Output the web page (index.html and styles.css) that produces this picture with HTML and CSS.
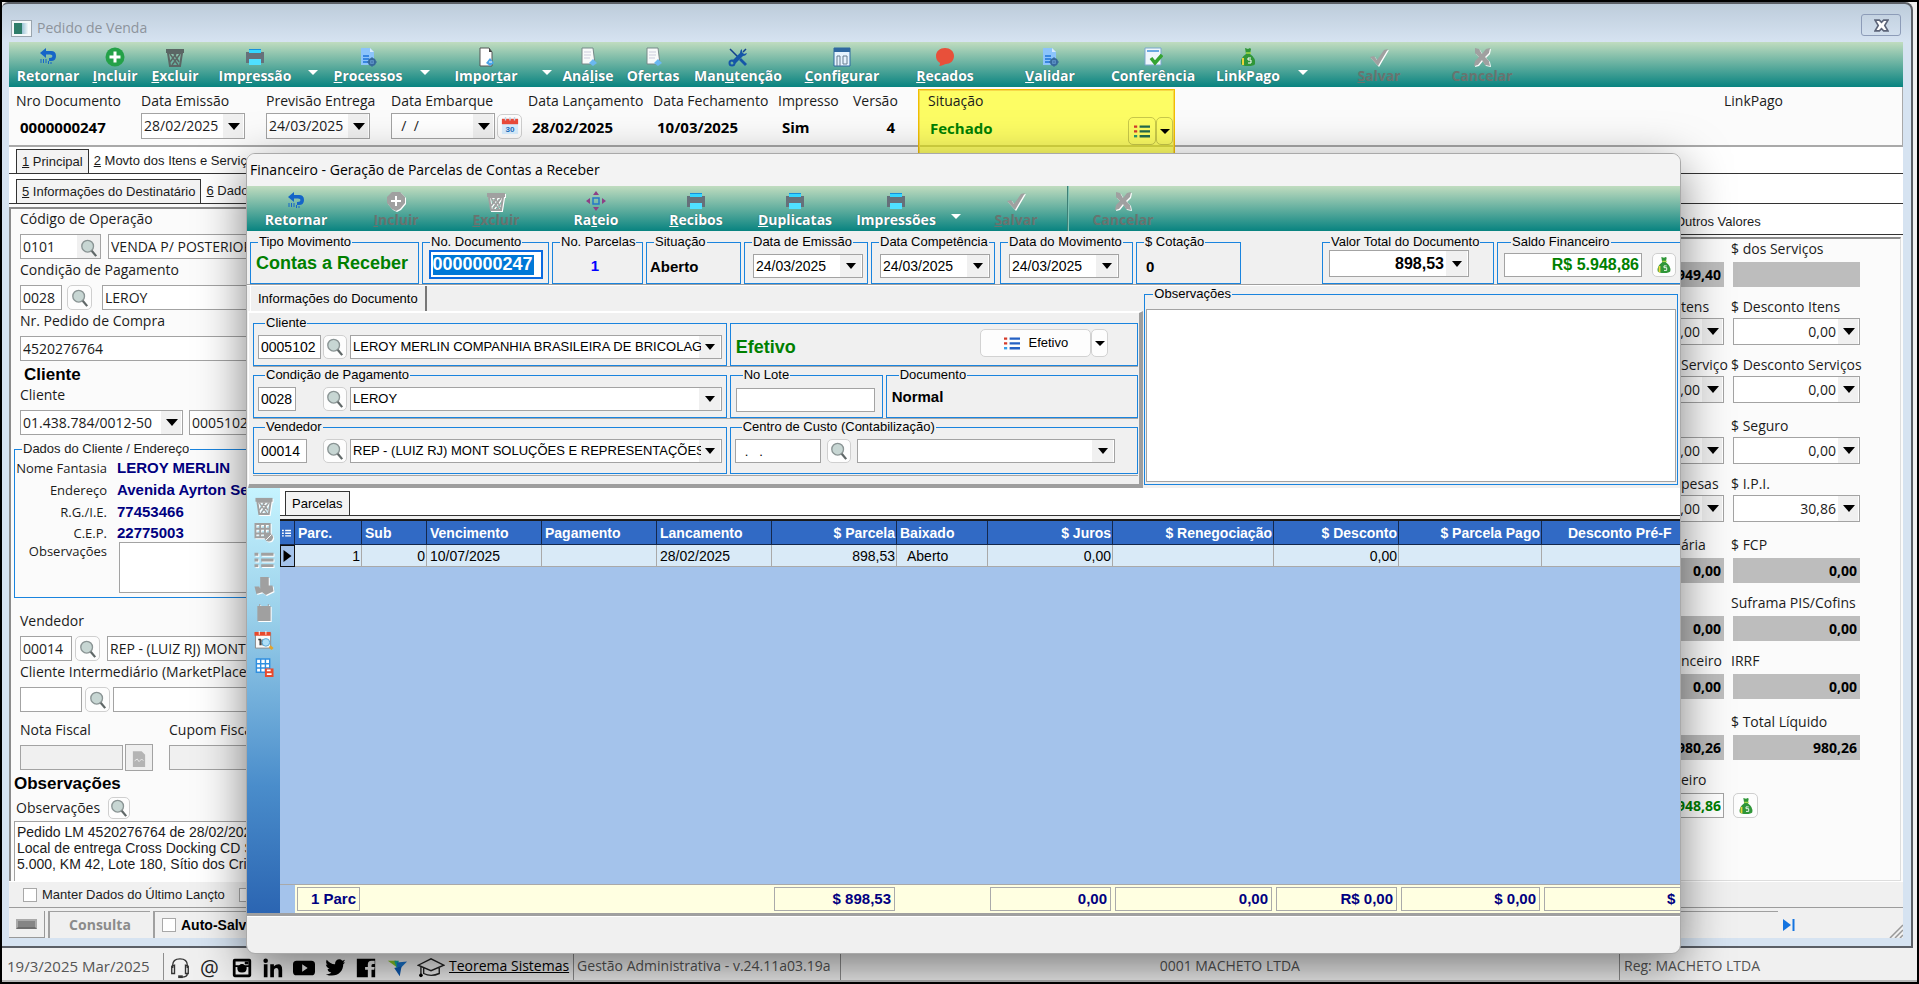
FILE: index.html
```html
<!DOCTYPE html>
<html lang="pt-BR">
<head>
    <meta charset="UTF-8">
    <title>Pedido de Venda</title>
    <link rel="stylesheet" href="styles.css">
</head>
<body>
    <!-- Icon definitions -->
    <svg class="icon-defs" aria-hidden="true">
        <symbol id="i-return" viewBox="0 0 20 20">
            <path d="M2 6 L8 1 V4 H13 Q18 4 18 9 Q18 14 13 14 H11 V11 H12 Q14.500 11 14.500 9 Q14.500 7.500 12 7.500 H8 V11 Z" fill="#1565c8"/>
            <path d="M3 12v4M5.500 12v4M8 12v4M10.500 14v3M13 15v2" stroke="#1565c8" stroke-width="1"/>
        </symbol>
        <symbol id="i-plus" viewBox="0 0 20 20">
            <circle cx="10" cy="10" r="9.500" fill="#24a148"/>
            <path d="M10 4.500v11M4.500 10h11" stroke="#fff" stroke-width="3"/>
        </symbol>
        <symbol id="i-plus-off" viewBox="0 0 20 20">
            <path d="M6 1h8l5 5v6l-5 6-4 2-4-2-5-6V6z" fill="#a0a0a0"/>
            <path d="M10 5v10M5 10h10" stroke="#fff" stroke-width="2"/>
        </symbol>
        <symbol id="i-trash" viewBox="0 0 20 20">
            <path d="M1 2h18v4H1z" fill="currentColor"/>
            <path d="M3 6h14l-2 13H5z" fill="none" stroke="currentColor" stroke-width="2"/>
            <path d="M5 7l8 11M9 7l5 8M15 7L7 18M11 7l-6 8" stroke="currentColor" stroke-width="1.500"/>
        </symbol>
        <symbol id="i-printer" viewBox="0 0 20 20">
            <path d="M4 2h12v5H4z" fill="#35d6ff"/>
            <path d="M4 2h12v2H4z" fill="#1690dc"/>
            <path d="M1 5h18v11H1z" fill="#66707a"/>
            <path d="M4 12h12v6H4z" fill="#4fe0ff"/>
            <path d="M4 3h12v3H4z" fill="#35d6ff"/>
        </symbol>
        <symbol id="i-docgear" viewBox="0 0 20 20">
            <path d="M3 1h9l4 4v13H3z" fill="#8cc4fb"/>
            <path d="M12 1v4h4z" fill="#d6ebff"/>
            <path d="M5 9h6M5 12h6M5 15h5" stroke="#1d72d8" stroke-width="1.500"/>
            <circle cx="14" cy="15" r="3" fill="none" stroke="#36699c" stroke-width="2"/>
            <path d="M14 10v10M9 15h10" stroke="#36699c" stroke-width="1"/>
        </symbol>
        <symbol id="i-doc" viewBox="0 0 20 20">
            <path d="M4 1h9l3 4v14H4z" fill="#fff" stroke="#555"/>
            <path d="M13 1v4h3z" fill="#444"/>
            <path d="M14 11l4 5-4 3-4-3z" fill="#4aa3e8"/>
            <path d="M13 15h3" stroke="#fff"/>
        </symbol>
        <symbol id="i-doclines" viewBox="0 0 20 20">
            <path d="M4 1h11l2 16H4z" fill="#f8fafa" stroke="#788"/>
            <path d="M6 5h7M6 8h7M6 11h6" stroke="#ccd"/>
            <path d="M15 12l4 4-4 3-4-3z" fill="#6ab8f0"/>
        </symbol>
        <symbol id="i-tools" viewBox="0 0 20 20">
            <path d="M2 2l9 9M18 2l-3 3" stroke="#123f8e" stroke-width="1.500"/>
            <path d="M13 11l6 6-2 2-6-6z" fill="#1556a8"/>
            <path d="M14 2q-2 1-2 4L4 14l3 3 8-8q3 0 4-3l-3 1-2-2z" fill="#1556a8"/>
            <circle cx="4" cy="16" r="2.500" fill="none" stroke="#1556a8" stroke-width="2"/>
        </symbol>
        <symbol id="i-window" viewBox="0 0 20 20">
            <path d="M2 1h16v18H2z" fill="#e6f4ff" stroke="#2f68a0"/>
            <path d="M2 1h16v4H2z" fill="#2f68a0"/>
            <path d="M5 19V9h3v10M11 9h4v8h-4z" fill="none" stroke="#667c90"/>
        </symbol>
        <symbol id="i-bubble" viewBox="0 0 20 20">
            <path d="M10 1c5 0 9 3 9 8s-4 8-8 8c-1 0-4 2-7 2 1-1 1-2 1-3-3-2-4-4-4-7 0-5 4-8 9-8z" fill="#e8503a"/>
        </symbol>
        <symbol id="i-doccheck" viewBox="0 0 20 20">
            <path d="M2 1h16v17H2z" fill="#eef6fc" stroke="#7aa6cc"/>
            <path d="M4 3h12v2H4z" fill="#6aa9e2"/>
            <path d="M8 11l4 5 7-8" fill="none" stroke="#35a432" stroke-width="3.500"/>
        </symbol>
        <symbol id="i-bag" viewBox="0 0 20 20">
            <path d="M7 1l3 1 2-1 1 1-1 5q6 4 5 10-1 2-7 2t-7-2Q2 11 8 7z" fill="#2f9638"/>
            <path d="M8 6h5" stroke="#a7d94a" stroke-width="1.500"/>
            <path d="M4 11h2v7H4z" fill="#e9d53c"/>
            <path d="M13 11h-3v2h3v3h-3" fill="none" stroke="#fff" stroke-width="1"/>
        </symbol>
        <symbol id="i-check" viewBox="0 0 20 20">
            <path d="M1 10l4-1 3 4 7-10 4-1-10 17z" fill="#a0a0a0"/>
        </symbol>
        <symbol id="i-cross" viewBox="0 0 20 20">
            <path d="M3 1l4 1 3 5 4-5 4-1-1 5-4 4 4 4 1 5-5-1-3-5-4 5-4 1 1-5 4-4-4-4z" fill="#a0a0a0"/>
        </symbol>
        <symbol id="i-move" viewBox="0 0 20 20">
            <path d="M10 0l3 4H7zM10 20l3-4H7zM0 10l4-3v6zM20 10l-4-3v6z" fill="#8e3f86"/>
            <path d="M7 7h6v6H7z" fill="none" stroke="#2578c8" stroke-width="1.500"/>
        </symbol>
        <symbol id="i-search" viewBox="0 0 20 20">
            <circle cx="8.500" cy="8" r="6.500" fill="#c7d6d3" stroke="#8a9494" stroke-width="1.500"/>
            <path d="M13 13l5 6" stroke="#606868" stroke-width="2.500"/>
        </symbol>
        <symbol id="i-calendar" viewBox="0 0 20 20">
            <path d="M1 2h18v17H1z" fill="#d9efff"/>
            <path d="M1 2h18v6H1z" fill="#ea4b3a"/>
            <path d="M5 0v4M10 0v4M15 0v4" stroke="#c6dced" stroke-width="1.500"/>
            <text x="10" y="17" text-anchor="middle" class="cal-text">30</text>
        </symbol>
        <symbol id="i-list" viewBox="0 0 20 20">
            <path d="M0 3h4v3H0zM0 9h4v3H0z" fill="var(--dot, #d43b2a)"/>
            <path d="M0 15h4v3H0z" fill="var(--dot3, #38a0e8)"/>
            <path d="M7 3h13v3H7zM7 9h13v3H7zM7 15h13v3H7z" fill="var(--bar, #2561c4)"/>
        </symbol>
        <symbol id="i-tableoff" viewBox="0 0 20 20">
            <path d="M1 1h15v14H1zM6 1v14M11 1v14M1 6h15M1 11h15" fill="none" stroke="#a0a0a0" stroke-width="2"/>
            <circle cx="15" cy="15" r="4.500" fill="#a0a0a0"/>
            <path d="M12 18l6-6" stroke="#fff"/>
        </symbol>
        <symbol id="i-stamp" viewBox="0 0 20 20">
            <path d="M6 0h9v9h4l1 6-8 4-4-3-6 2-2-8h5l1 2z" fill="#a0a0a0"/>
        </symbol>
        <symbol id="i-note" viewBox="0 0 20 20">
            <path d="M3 2h2V0h1v2h8V0h1v2h2v16H3z" fill="#a0a0a0"/>
        </symbol>
        <symbol id="i-calsearch" viewBox="0 0 20 20">
            <path d="M1 2h16v16H1z" fill="#fafafa" stroke="#888"/>
            <path d="M0 1h17v4H0z" fill="#e8492c"/>
            <path d="M5 0v4M12 0v4" stroke="#fff"/>
            <path d="M4 9h2v6M8 9v6" stroke="#333" stroke-width="1.500" fill="none"/>
            <circle cx="12" cy="12" r="4" fill="#aee0fa" stroke="#5aa8d4"/>
            <path d="M16 16l3 3" stroke="#e2a32b" stroke-width="3"/>
        </symbol>
        <symbol id="i-gridsave" viewBox="0 0 20 20">
            <path d="M2 1h14v14H2z" fill="#fff"/>
            <path d="M2 1h14v14H2zM6.500 1v14M11.500 1v14M2 6h14M2 10.500h14" fill="none" stroke="#2f8fe0" stroke-width="1.500"/>
            <path d="M11 11h9v9h-9z" fill="#e8492c"/>
            <path d="M13 12h4v2h-4zM13 16h5v2h-5z" fill="#fff"/>
        </symbol>
        <symbol id="i-headset" viewBox="0 0 24 24">
            <path d="M4 12V9q0-7 8-7t8 7v3M3 10v8h3v-9zM18 9v9h3v-8zM20 18q0 4-6 4" fill="none" stroke="#333" stroke-width="1.500"/>
            <path d="M10 20h5v3h-5z" fill="#333"/>
        </symbol>
        <symbol id="i-insta" viewBox="0 0 24 24">
            <path fill-rule="evenodd" d="M4 2h16q2 0 2 2v16q0 2-2 2H4q-2 0-2-2V4q0-2 2-2zm1 3v4h4q3-3 6 0h4V5zm0 6v8h14v-8h-2q1 6-5 6t-5-6z" fill="#000"/>
            <circle cx="12" cy="12" r="3" fill="none" stroke="#000" stroke-width="1.500"/>
            <path d="M15 5h4v3h-4z" fill="#000"/>
        </symbol>
        <symbol id="i-in" viewBox="0 0 24 24">
            <circle cx="4" cy="4" r="2.500"/>
            <path d="M2 8h4v14H2zM9 8h4v2q2-2 5-2 4 0 4 6v8h-4v-7q0-3-2-3-3 0-3 3v7H9z"/>
        </symbol>
        <symbol id="i-tube" viewBox="0 0 24 24">
            <path fill-rule="evenodd" d="M4 4h16q4 0 4 4v8q0 4-4 4H4q-4 0-4-4V8q0-4 4-4zm6 4v8l6-4z"/>
        </symbol>
        <symbol id="i-bird" viewBox="0 0 24 24">
            <path d="M23 6l-2 2c0 9-8 15-19 11 3 0 5-1 6-2-3-1-4-2-4-4h2c-2-1-4-3-4-5l2 1C2 7 2 5 3 3c3 3 5 5 9 5 0-5 5-7 8-4l3-1-2 3z"/>
        </symbol>
        <symbol id="i-face" viewBox="0 0 24 24">
            <path fill-rule="evenodd" d="M2 2h20v20h-4v-8h3l.500-3H18V9q0-1.500 2-1.500h1.500V4H18q-4 0-4 4v3h-3v3h3v8H2z"/>
        </symbol>
        <symbol id="i-teorema" viewBox="0 0 24 24">
            <path d="M2 4h9l2 8z" fill="#8ac926"/>
            <path d="M9 4h5l-2 9z" fill="#11b0a5"/>
            <path d="M12 6l11-1-7 7-4-1z" fill="#1976d2"/>
            <path d="M9 12l8-2-2 11z" fill="#0d5bb5"/>
        </symbol>
        <symbol id="i-cap" viewBox="0 0 30 24">
            <path d="M1 9l14-7 14 7-14 6zM7 12v6q8 4 17 0v-6M4 11v8" fill="none" stroke="#222" stroke-width="1.500"/>
            <circle cx="4" cy="20" r="2"/>
        </symbol>
    </svg>

    <div class="app">
        <!-- Main window -->
        <main class="window">
            <div class="titlebar">
                <span class="app-icon"></span>
                <h1>Pedido de Venda</h1>
                <button class="close" aria-label="Fechar">
                    <svg viewBox="0 0 14 12" width="15" height="13"><path d="M1 1h4l2 2 2-2h4L10 6l3 5H9L7 9l-2 2H1l3-5z" fill="#fff" stroke="#5c6478" stroke-width="1.500"/></svg>
                </button>
            </div>

            <div class="client">
                <nav class="toolbar main-toolbar">
                    <button class="tool"><svg><use href="#i-return"/></svg>Retornar</button>
                    <button class="tool"><svg><use href="#i-plus"/></svg><span><u>I</u>ncluir</span></button>
                    <button class="tool trash"><svg><use href="#i-trash"/></svg><span><u>E</u>xcluir</span></button>
                    <button class="tool"><svg><use href="#i-printer"/></svg><span>Imp<u>r</u>essão</span></button>
                    <button class="more" aria-label="Mais impressões"></button>
                    <button class="tool"><svg><use href="#i-docgear"/></svg><span><u>P</u>rocessos</span></button>
                    <button class="more" aria-label="Mais processos"></button>
                    <button class="tool"><svg><use href="#i-doc"/></svg><span>Impor<u>t</u>ar</span></button>
                    <button class="more" aria-label="Mais importar"></button>
                    <button class="tool"><svg><use href="#i-doclines"/></svg><span>Aná<u>l</u>ise</span></button>
                    <button class="tool"><svg><use href="#i-doclines"/></svg>Ofertas</button>
                    <button class="tool"><svg><use href="#i-tools"/></svg><span>Man<u>u</u>tenção</span></button>
                    <button class="tool"><svg><use href="#i-window"/></svg><span><u>C</u>onfigurar</span></button>
                    <button class="tool"><svg><use href="#i-bubble"/></svg><span><u>R</u>ecados</span></button>
                    <button class="tool"><svg><use href="#i-docgear"/></svg><span><u>V</u>alidar</span></button>
                    <button class="tool"><svg><use href="#i-doccheck"/></svg>Conferência</button>
                    <button class="tool"><svg><use href="#i-bag"/></svg>LinkPago</button>
                    <button class="more" aria-label="Mais LinkPago"></button>
                    <button class="tool" disabled><svg><use href="#i-check"/></svg><span><u>S</u>alvar</span></button>
                    <button class="tool" disabled><svg><use href="#i-cross"/></svg>Cancelar</button>
                </nav>

                <!-- Order header -->
                <section class="order-header">
                    <div class="head-field"><span>Nro Documento</span><b>0000000247</b></div>
                    <div class="head-field">
                        <label for="emissao">Data Emissão</label>
                        <select id="emissao"><option>28/02/2025</option></select>
                    </div>
                    <div class="head-field">
                        <label for="entrega">Previsão Entrega</label>
                        <select id="entrega"><option>24/03/2025</option></select>
                    </div>
                    <div class="head-field">
                        <label for="embarque">Data Embarque</label>
                        <div class="line">
                            <select id="embarque"><option>&nbsp; /&nbsp; /</option></select>
                            <button class="mini" aria-label="Calendário"><svg><use href="#i-calendar"/></svg></button>
                        </div>
                    </div>
                    <div class="head-field"><span>Data Lançamento</span><b>28/02/2025</b></div>
                    <div class="head-field"><span>Data Fechamento</span><b>10/03/2025</b></div>
                    <div class="head-field"><span>Impresso</span><b>Sim</b></div>
                    <div class="head-field version"><span>Versão</span><b>4</b></div>
                    <div class="status-mark">
                        <div class="head-field"><span>Situação</span><b>Fechado</b></div>
                        <button class="list-btn" aria-label="Opções"><svg><use href="#i-list"/></svg></button>
                        <button class="arrow-btn" aria-label="Mais opções"></button>
                    </div>
                    <div class="head-field link-pago"><span>LinkPago</span></div>
                </section>

                <div class="tabs">
                    <button class="tab active"><u>1</u> Principal</button>
                    <button class="tab"><u>2</u> Movto dos Itens e Serviços</button>
                </div>
                <div class="tabs">
                    <button class="tab active"><u>5</u> Informações do Destinatário</button>
                    <button class="tab"><u>6</u> Dados</button>
                </div>

                <div class="order-body">
                    <!-- Recipient form -->
                    <section class="recipient">
                        <div class="field">
                            <label for="operacao">Código de Operação</label>
                            <div class="line">
                                <div class="lookup">
                                    <input id="operacao" value="0101">
                                    <button aria-label="Buscar operação"><svg><use href="#i-search"/></svg></button>
                                </div>
                                <input class="wide" aria-label="Operação" value="VENDA P/ POSTERIOR">
                            </div>
                        </div>
                        <div class="field">
                            <label for="condicao">Condição de Pagamento</label>
                            <div class="line payment">
                                <input id="condicao" class="w-code" value="0028">
                                <button class="mini" aria-label="Buscar condição"><svg><use href="#i-search"/></svg></button>
                                <input class="wide" aria-label="Condição" value="LEROY">
                            </div>
                        </div>
                        <div class="field">
                            <label for="pedido">Nr. Pedido de Compra</label>
                            <div class="line"><input id="pedido" class="wide" value="4520276764"></div>
                        </div>
                        <h2>Cliente</h2>
                        <div class="field">
                            <label for="cnpj">Cliente</label>
                            <div class="line">
                                <select id="cnpj" class="w-cnpj"><option>01.438.784/0012-50</option></select>
                                <input class="wide" aria-label="Código do cliente" value="0005102">
                            </div>
                        </div>
                        <fieldset class="group client-data">
                            <legend>Dados do Cliente / Endereço</legend>
                            <span>Nome Fantasia</span><b>LEROY MERLIN</b>
                            <span>Endereço</span><b>Avenida Ayrton Senna</b>
                            <span>R.G./I.E.</span><b>77453466</b>
                            <span>C.E.P.</span><b>22775003</b>
                            <label for="obs-cliente">Observações</label><textarea id="obs-cliente"></textarea>
                        </fieldset>
                        <div class="field seller">
                            <label for="vendedor">Vendedor</label>
                            <div class="line">
                                <input id="vendedor" class="w-seller" value="00014">
                                <button class="mini" aria-label="Buscar vendedor"><svg><use href="#i-search"/></svg></button>
                                <input class="wide" aria-label="Nome do vendedor" value="REP - (LUIZ RJ) MONT">
                            </div>
                        </div>
                        <div class="field">
                            <label for="intermediario">Cliente Intermediário (MarketPlace)</label>
                            <div class="line broker">
                                <input id="intermediario" class="w-inter">
                                <button class="mini" aria-label="Buscar intermediário"><svg><use href="#i-search"/></svg></button>
                                <input class="wide" aria-label="Intermediário">
                            </div>
                        </div>
                        <div class="fiscal">
                            <div class="field">
                                <label for="nota">Nota Fiscal</label>
                                <div class="line">
                                    <input id="nota" class="w-nota" disabled>
                                    <button class="xml" aria-label="XML" disabled><svg viewBox="0 0 16 20"><path d="M1 1h10l4 4v14H1z" fill="#b4b4b4"/><path d="M3 12l3-2 2 3 3-3 2 2" fill="none" stroke="#eee"/></svg></button>
                                </div>
                            </div>
                            <div class="field">
                                <label for="cupom">Cupom Fiscal</label>
                                <div class="line"><input id="cupom" class="wide" disabled></div>
                            </div>
                        </div>
                        <h2 class="obs-title">Observações</h2>
                        <div class="obs-line">
                            <label for="obs">Observações</label>
                            <button class="mini" aria-label="Buscar observações"><svg><use href="#i-search"/></svg></button>
                        </div>
                        <textarea id="obs" class="obs-text">Pedido LM 4520276764 de 28/02/2025
Local de entrega Cross Docking CD SP
5.000, KM 42, Lote 180, Sítio dos Cristais</textarea>
                    </section>

                    <!-- Totals -->
                    <section class="totals">
                        <div class="tabs"><button class="tab">Outros Valores</button></div>
                        <div class="totals-grid">
                            <div class="total"><label for="t1"></label><input id="t1" class="gray" value="949,40"></div>
                            <div class="total"><label for="t2">$ dos Serviços</label><input id="t2" class="gray"></div>
                            <div class="total"><label for="t3">tens</label><select id="t3"><option>0,00</option></select></div>
                            <div class="total"><label for="t4">$ Desconto Itens</label><select id="t4"><option>0,00</option></select></div>
                            <div class="total end"><label for="t5">Serviços</label><select id="t5"><option>0,00</option></select></div>
                            <div class="total end"><label for="t6">$ Desconto Serviços</label><select id="t6"><option>0,00</option></select></div>
                            <div class="total"><label for="t7"></label><select id="t7"><option>0,00</option></select></div>
                            <div class="total"><label for="t8">$ Seguro</label><select id="t8"><option>0,00</option></select></div>
                            <div class="total end"><label for="t9">pesas</label><select id="t9"><option>0,00</option></select></div>
                            <div class="total end"><label for="t10">$ I.P.I.</label><select id="t10"><option>30,86</option></select></div>
                            <div class="total"><label for="t11">ária</label><input id="t11" class="gray" value="0,00"></div>
                            <div class="total"><label for="t12">$ FCP</label><input id="t12" class="gray" value="0,00"></div>
                            <div class="total"><label for="t13"></label><input id="t13" class="gray" value="0,00"></div>
                            <div class="total"><label for="t14">Suframa PIS/Cofins</label><input id="t14" class="gray" value="0,00"></div>
                            <div class="total end"><label for="t15">nceiro</label><input id="t15" class="gray" value="0,00"></div>
                            <div class="total end"><label for="t16">IRRF</label><input id="t16" class="gray" value="0,00"></div>
                            <div class="total"><label for="t17"></label><input id="t17" class="gray" value="980,26"></div>
                            <div class="total"><label for="t18">$ Total Líquido</label><input id="t18" class="gray" value="980,26"></div>
                            <div class="total"><label for="t19">eiro</label><input id="t19" class="green" value="5.948,86"></div>
                            <div class="total bag"><button class="mini" aria-label="Saldo"><svg><use href="#i-bag"/></svg></button></div>
                        </div>
                    </section>
                </div>

                <div class="keep-bar">
                    <label><input type="checkbox"> Manter Dados do Último Lançto</label>
                    <label><input type="checkbox"></label>
                </div>
                <div class="bottom-bar">
                    <button class="key" aria-label="Teclado"><span></span></button>
                    <span class="mode">Consulta</span>
                    <label class="auto"><input type="checkbox"> Auto-Salvar</label>
                    <button class="last" aria-label="Último"><svg viewBox="0 0 14 14" width="16" height="14"><path d="M1 1l8 6-8 6z" fill="#1474e0"/><path d="M11.500 1v12" stroke="#1474e0" stroke-width="2"/></svg></button>
                    <svg class="grip" viewBox="0 0 14 14"><path d="M1 14L14 1M6 14l8-8M11 14l3-3" stroke="#999" stroke-width="1.500"/></svg>
                </div>
            </div>
        </main>

        <!-- Status bar -->
        <footer class="statusbar">
            <span class="date">19/3/2025 Mar/2025</span>
            <nav class="social">
                <a href="#" aria-label="Suporte"><svg><use href="#i-headset"/></svg></a>
                <a href="#" class="at">@</a>
                <a href="#" aria-label="Instagram"><svg><use href="#i-insta"/></svg></a>
                <a href="#" aria-label="LinkedIn"><svg><use href="#i-in"/></svg></a>
                <a href="#" aria-label="YouTube"><svg><use href="#i-tube"/></svg></a>
                <a href="#" aria-label="Twitter"><svg><use href="#i-bird"/></svg></a>
                <a href="#" aria-label="Facebook"><svg><use href="#i-face"/></svg></a>
                <a href="#" aria-label="Teorema"><svg><use href="#i-teorema"/></svg></a>
                <a href="#" aria-label="Treinamento" class="cap"><svg><use href="#i-cap"/></svg></a>
            </nav>
            <a href="#" class="site">Teorema Sistemas</a>
            <span class="version-info">Gestão Administrativa - v.24.11a03.19a</span>
            <span class="company">0001 MACHETO LTDA</span>
            <span class="reg">Reg: MACHETO LTDA</span>
        </footer>
    </div>

    <!-- Financial dialog -->
    <section class="dialog" role="dialog" aria-labelledby="dialog-title">
        <h2 id="dialog-title">Financeiro - Geração de Parcelas de Contas a Receber</h2>
        <nav class="toolbar dialog-toolbar">
            <button class="tool"><svg><use href="#i-return"/></svg>Retornar</button>
            <button class="tool" disabled><svg><use href="#i-plus-off"/></svg><span><u>I</u>ncluir</span></button>
            <button class="tool" disabled><svg><use href="#i-trash"/></svg><span><u>E</u>xcluir</span></button>
            <button class="tool"><svg><use href="#i-move"/></svg><span>Ra<u>t</u>eio</span></button>
            <button class="tool"><svg><use href="#i-printer"/></svg><span><u>R</u>ecibos</span></button>
            <button class="tool"><svg><use href="#i-printer"/></svg><span><u>D</u>uplicatas</span></button>
            <button class="tool"><svg><use href="#i-printer"/></svg>Impressões</button>
            <button class="more" aria-label="Mais impressões"></button>
            <button class="tool" disabled><svg><use href="#i-check"/></svg><span><u>S</u>alvar</span></button>
            <span class="separator"></span>
            <button class="tool" disabled><svg><use href="#i-cross"/></svg>Cancelar</button>
        </nav>

        <div class="summary">
            <fieldset class="group s-type"><legend>Tipo Movimento</legend><b>Contas a Receber</b></fieldset>
            <fieldset class="group s-doc"><legend>No. Documento</legend><input aria-label="No. Documento" value="0000000247"></fieldset>
            <fieldset class="group s-count"><legend>No. Parcelas</legend><b>1</b></fieldset>
            <fieldset class="group s-state"><legend>Situação</legend><b>Aberto</b></fieldset>
            <fieldset class="group s-date"><legend>Data de Emissão</legend><select aria-label="Data de Emissão"><option>24/03/2025</option></select></fieldset>
            <fieldset class="group s-date"><legend>Data Competência</legend><select aria-label="Data Competência"><option>24/03/2025</option></select></fieldset>
            <fieldset class="group s-date s-mov"><legend>Data do Movimento</legend><select aria-label="Data do Movimento"><option>24/03/2025</option></select></fieldset>
            <fieldset class="group s-rate"><legend>$ Cotação</legend><b>0</b></fieldset>
            <fieldset class="group s-total"><legend>Valor Total do Documento</legend><select aria-label="Valor Total do Documento"><option>898,53</option></select></fieldset>
            <fieldset class="group s-balance"><legend>Saldo Financeiro</legend>
                <input aria-label="Saldo Financeiro" value="R$ 5.948,86">
                <button class="mini" aria-label="Ver saldo"><svg><use href="#i-bag"/></svg></button>
            </fieldset>
        </div>

        <div class="document">
            <div class="doc-info">
                <button class="doc-tab">Informações do Documento</button>
                <div class="doc-panel">
                    <div class="doc-row">
                        <fieldset class="group party">
                            <legend>Cliente</legend>
                            <input class="w-full" aria-label="Código do cliente" value="0005102">
                            <button class="mini" aria-label="Buscar cliente"><svg><use href="#i-search"/></svg></button>
                            <select aria-label="Cliente"><option>LEROY MERLIN COMPANHIA BRASILEIRA DE BRICOLAGEM</option></select>
                        </fieldset>
                        <div class="group effective">
                            <b>Efetivo</b>
                            <button class="list-btn"><svg><use href="#i-list"/></svg>Efetivo</button>
                            <button class="arrow-btn" aria-label="Mais opções"></button>
                        </div>
                    </div>
                    <div class="doc-row">
                        <fieldset class="group party">
                            <legend>Condição de Pagamento</legend>
                            <input class="w-short" aria-label="Código da condição" value="0028">
                            <button class="mini" aria-label="Buscar condição"><svg><use href="#i-search"/></svg></button>
                            <select aria-label="Condição de Pagamento"><option>LEROY</option></select>
                        </fieldset>
                        <div class="lot-row">
                            <fieldset class="group lot"><legend>No Lote</legend><input aria-label="No Lote"></fieldset>
                            <fieldset class="group kind"><legend>Documento</legend><b>Normal</b></fieldset>
                        </div>
                    </div>
                    <div class="doc-row last-row">
                        <fieldset class="group party">
                            <legend>Vendedor</legend>
                            <input class="w-mid" aria-label="Código do vendedor" value="00014">
                            <button class="mini" aria-label="Buscar vendedor"><svg><use href="#i-search"/></svg></button>
                            <select aria-label="Vendedor"><option>REP - (LUIZ RJ) MONT SOLUÇÕES E REPRESENTAÇÕES</option></select>
                        </fieldset>
                        <fieldset class="group cost">
                            <legend>Centro de Custo (Contabilização)</legend>
                            <input aria-label="Centro de Custo" value="  .   .">
                            <button class="mini" aria-label="Buscar centro de custo"><svg><use href="#i-search"/></svg></button>
                            <select aria-label="Nome do centro de custo"><option></option></select>
                        </fieldset>
                    </div>
                </div>
            </div>
            <fieldset class="group notes">
                <legend>Observações</legend>
                <textarea aria-label="Observações"></textarea>
            </fieldset>
        </div>

        <div class="installments">
            <aside class="side">
                <button aria-label="Excluir parcela" disabled><svg><use href="#i-trash"/></svg></button>
                <button aria-label="Cancelar parcela" disabled><svg><use href="#i-tableoff"/></svg></button>
                <button aria-label="Listar" disabled><svg class="list-off"><use href="#i-list"/></svg></button>
                <button aria-label="Baixar" disabled><svg><use href="#i-stamp"/></svg></button>
                <button aria-label="Nota" disabled><svg><use href="#i-note"/></svg></button>
                <button aria-label="Consultar data"><svg><use href="#i-calsearch"/></svg></button>
                <button aria-label="Salvar grade"><svg><use href="#i-gridsave"/></svg></button>
            </aside>
            <div class="grid-area">
                <div class="tabs"><button class="tab active">Parcelas</button></div>
                <div class="grid-scroll">
                    <table>
                        <colgroup>
                            <col class="c-mark"><col class="c-parc"><col class="c-sub"><col class="c-date"><col class="c-date"><col class="c-date">
                            <col class="c-value"><col class="c-status"><col class="c-value"><col class="c-reneg"><col class="c-value"><col class="c-paid"><col class="c-pre">
                        </colgroup>
                        <thead>
                            <tr>
                                <th class="mark"><svg><use href="#i-list"/></svg></th>
                                <th>Parc.</th><th>Sub</th><th>Vencimento</th><th>Pagamento</th><th>Lancamento</th>
                                <th class="num">$ Parcela</th><th>Baixado</th><th class="num">$ Juros</th><th class="num">$ Renegociação</th>
                                <th class="num">$ Desconto</th><th class="num">$ Parcela Pago</th><th class="pre">Desconto Pré-F</th>
                            </tr>
                        </thead>
                        <tbody>
                            <tr class="row">
                                <td class="mark"><svg viewBox="0 0 8 12"><path d="M0 0l8 6-8 6z"/></svg></td>
                                <td class="num">1</td><td class="num">0</td><td>10/07/2025</td><td></td><td>28/02/2025</td>
                                <td class="num">898,53</td><td class="state">Aberto</td><td class="num">0,00</td><td></td>
                                <td class="num">0,00</td><td></td><td></td>
                            </tr>
                            <tr class="filler"><td colspan="13"></td></tr>
                        </tbody>
                        <tfoot>
                            <tr>
                                <td class="mark"></td>
                                <td><span>1 Parc</span></td><td></td><td></td><td></td><td></td>
                                <td><span>$ 898,53</span></td><td></td><td><span>0,00</span></td><td><span>0,00</span></td>
                                <td><span>R$ 0,00</span></td><td><span>$ 0,00</span></td><td><span class="cut">$</span></td>
                            </tr>
                        </tfoot>
                    </table>
                </div>
            </div>
        </div>
        <div class="dialog-foot"></div>
    </section>
</body>
</html>
```
FILE: styles.css
```css
/* Base */
* {
    box-sizing: border-box;
}

:root {
    --ui: "Open Sans", "Noto Sans", sans-serif;
    --sans: "Liberation Sans", Arial, sans-serif;
    --blue: #1a84de;
    --navy: #000080;
    --green: #008000;
    --arrow: url("data:image/svg+xml,%3Csvg xmlns='http://www.w3.org/2000/svg' width='12' height='7'%3E%3Cpath d='M0 0h12L6 7z'/%3E%3C/svg%3E");
}

body {
    margin: 0;
    padding: 2px;
    height: 100vh;
    background: #000;
    font-family: var(--ui);
    font-size: 14px;
    line-height: 20px;
    color: #1b1b1b;
    position: relative;
    overflow: hidden;
}

h1, h2 {
    margin: 0;
}

button, input, select, textarea {
    font: inherit;
    color: inherit;
    border-radius: 0;
    margin: 0;
}

button {
    background: none;
    border: 0;
    padding: 0;
}

.icon-defs {
    position: absolute;
    width: 0;
    height: 0;
}

.cal-text {
    font: bold 9px var(--sans);
    fill: #1d6fc0;
}

input, select, textarea {
    border: 1px solid #a3a3a3;
    background-color: #fff;
    padding: 0 2px;
    height: 25px;
    min-width: 0;
    outline: 0;
}

textarea {
    resize: none;
    display: block;
}

select {
    appearance: none;
    padding-right: 20px;
    background-image: var(--arrow), linear-gradient(#f0f0f0, #f0f0f0);
    background-repeat: no-repeat;
    background-position: right 4px center, right 1px center;
    background-size: 12px 7px, 20px 100%;
    text-overflow: clip;
}

input[type="checkbox"] {
    appearance: none;
    width: 14px;
    height: 14px;
    background: #fff;
    border: 1px solid #a8a8a8;
}

.line {
    display: flex;
    align-items: center;
}

.wide {
    flex: 1;
}

.mini {
    flex: none;
    width: 25px;
    height: 25px;
    display: flex;
    align-items: center;
    justify-content: center;
    background: #fdfdfd;
    border: 1px solid #cfcfcf;
    border-radius: 5px;
}

.mini svg {
    width: 18px;
    height: 18px;
}

.group {
    margin: 0;
    min-width: 0;
    padding: 0;
    border: 1px solid var(--blue);
    font-family: var(--sans);
}

.group legend {
    margin-left: 7px;
    padding: 0 1px;
    font-size: 13px;
    line-height: 16px;
    white-space: nowrap;
}

/* Main window */
.app {
    height: 100%;
    display: flex;
    flex-direction: column;
    background: #f0f0f0;
}

.window {
    flex: 1;
    min-height: 0;
    display: flex;
    flex-direction: column;
    margin: 0 4px 5px 0;
    border: 1px solid #5b5f66;
    border-width: 2px 2px 2px 0;
    border-radius: 6px 8px 0 0;
    background: linear-gradient(#bdccdb, #d6e3f1 38px);
    padding: 0 8px 8px 7px;
}

.titlebar {
    flex: none;
    height: 38px;
    display: flex;
    align-items: center;
    padding-top: 10px;
}

.titlebar h1 {
    font-size: 14px;
    font-weight: 400;
    color: #8d949c;
}

.app-icon {
    width: 19px;
    height: 15px;
    margin: 0 6px 0 3px;
    border: 2px solid #f4f8fa;
    outline: 1px solid #9aa5ae;
    background: linear-gradient(90deg, #2f7d6a 55%, #9fc6d8 55%, #fff);
}

.close {
    margin: 0 2px 6px auto;
    width: 40px;
    height: 22px;
    border: 1px solid #8d9cb8;
    border-radius: 3px;
    display: flex;
    align-items: center;
    justify-content: center;
}

.client {
    flex: 1;
    min-height: 0;
    display: flex;
    flex-direction: column;
    background: #fff;
}

/* Toolbars */
.toolbar {
    flex: none;
    height: 45px;
    display: grid;
    background: linear-gradient(#c0dcbf, #088380);
}

.main-toolbar {
    grid-template-columns: 78px 56px 64px 96px 20px 90px 24px 98px 24px 58px 72px 98px 110px 96px 114px 92px 98px 12px 140px 66px;
}

.dialog-toolbar {
    grid-template-columns: 98px 102px 98px 102px 98px 100px 102px 18px 102px 4px 104px;
}

.tool {
    display: flex;
    flex-direction: column;
    align-items: center;
    padding-top: 5px;
    color: #fff;
    font-weight: 700;
    line-height: 18px;
    white-space: nowrap;
    text-shadow: 0 0 1px #245;
}

.tool svg {
    flex: none;
    width: 20px;
    height: 20px;
}

.tool.trash svg {
    color: #5b6664;
}

.tool:disabled {
    color: #69736f;
    text-shadow: none;
}

.tool:disabled svg {
    color: #a0a0a0;
    filter: drop-shadow(1px 1px 0 #fff);
}

.more::before {
    content: "";
    display: block;
    width: 0;
    margin: 0 auto 12px;
    border: 5px solid transparent;
    border-top-color: #fff;
    border-bottom: 0;
}

.more {
    align-self: end;
}

.separator {
    width: 2px;
    background: #3d7f76;
    border-right: 1px solid #7fc4b5;
}

/* Order header */
.order-header {
    flex: none;
    height: 60px;
    display: grid;
    grid-template-columns: 125px 125px 125px 137px 125px 125px 75px 65px 257px 1fr;
    padding-left: 7px;
    background: #fbfbfb;
    border-bottom: 2px solid #a9a9a9;
    border-right: 1px solid #a9a9a9;
}

.head-field {
    padding-top: 4px;
    white-space: nowrap;
}

.head-field > span, .head-field > label {
    display: block;
}

.head-field b {
    display: block;
    font-size: 15px;
    line-height: 32px;
    padding-left: 4px;
    color: #000;
}

.head-field select {
    display: block;
    margin-top: 2px;
    width: 104px;
    height: 26px;
}

.head-field .mini {
    margin: 2px 0 0 2px;
}

.version {
    width: 42px;
    text-align: right;
}

.status-mark {
    display: flex;
    align-items: flex-end;
    margin: 2px 0 -6px;
    padding: 0 1px 10px 9px;
    background: rgba(255, 255, 0, .6);
    border: 1px solid #f0c000;
    outline: 1px solid #f7d84a;
    outline-offset: -2px;
    z-index: 1;
}

.status-mark .head-field {
    flex: 1;
    align-self: flex-start;
    padding-top: 1px;
}

.status-mark b {
    padding-left: 2px;
    color: var(--green);
    line-height: 34px;
}

.list-btn, .arrow-btn {
    height: 28px;
    border: 1px solid #d2d2d2;
    border-radius: 5px;
    background: #fdfdfd;
    display: flex;
    align-items: center;
    justify-content: center;
}

.list-btn {
    width: 28px;
    gap: 7px;
}

.list-btn svg {
    width: 18px;
    height: 16px;
}

.arrow-btn {
    width: 17px;
    background: var(--arrow) center / 10px 5px no-repeat #fdfdfd;
}

.status-mark .list-btn, .status-mark .arrow-btn {
    background-color: transparent;
    border-color: #c9c94a;
    --bar: #236a4c;
    --dot3: #2a9a6a;
}

.link-pago {
    justify-self: end;
    margin-right: 119px;
}

/* Tabs */
.tabs {
    flex: none;
    display: flex;
    align-items: flex-end;
    height: 30px;
    padding-left: 7px;
    border-bottom: 1px solid #333;
    background: #fff;
}

.order-header + .tabs {
    height: 27px;
}

.tab {
    height: 24px;
    padding: 0 5px;
    font-family: var(--sans);
    font-size: 13px;
    white-space: nowrap;
}

.tab.active {
    border: 1px solid #333;
    border-bottom: 0;
    background: #f3f3f3;
}

/* Order body */
.order-body {
    flex: 1;
    min-height: 0;
    display: flex;
    justify-content: space-between;
    overflow: hidden;
    background: #fbfbfb;
}

.recipient {
    width: 420px;
    margin-top: 3px;
    padding-left: 3px;
    border-left: 2px solid #8b8b8b;
    border-top: 2px solid #8b8b8b;
}

.field, .recipient h2 {
    padding-left: 6px;
}

.field {
    margin-bottom: 1px;
}

.field label {
    display: block;
    white-space: nowrap;
}

.field .line {
    margin-top: 5px;
    height: 25px;
}

.field .mini {
    margin: 0 7px 0 3px;
}

.field .payment .mini {
    margin: 0 10px 0 5px;
}

.field .broker .mini {
    margin: 0 3px;
}

.lookup {
    display: flex;
    width: 81px;
    height: 25px;
    margin-right: 7px;
    border: 1px solid #a3a3a3;
    background: #fff;
}

.lookup input {
    border: 0;
    height: 23px;
    flex: 1;
}

.lookup button {
    width: 23px;
    background: #f0f0f0;
}

.lookup svg {
    width: 18px;
    height: 18px;
    vertical-align: middle;
}

.w-code {
    width: 42px;
}

.w-cnpj {
    width: 163px;
    margin-right: 6px;
}

.w-seller {
    width: 52px;
}

.w-inter {
    width: 62px;
}

.w-nota {
    width: 103px;
    margin-right: 2px;
}

.recipient h2 {
    margin-top: 4px;
    padding-left: 10px;
    font: bold 17px/20px var(--sans);
    color: #000;
}

.client-data {
    display: grid;
    grid-template-columns: 92px 1fr;
    grid-auto-rows: 22px 22px 21px 18px 52px;
    column-gap: 10px;
    height: 157px;
    margin-top: 6px;
    line-height: 22px;
}

.client-data span, .client-data label {
    font: 13px/22px var(--ui);
    text-align: right;
    white-space: nowrap;
}

.client-data b {
    font-size: 15px;
    color: var(--navy);
    white-space: nowrap;
}

.client-data textarea {
    height: 51px;
    margin: 2px 0 0 2px;
}

.field.seller {
    margin-top: 13px;
}

.fiscal {
    display: flex;
    gap: 10px;
    margin-top: 8px;
}

.fiscal .field:last-child {
    flex: 1;
}

.fiscal input {
    background: #f0f0f0;
}

.xml {
    width: 28px;
    height: 27px;
    border: 1px solid #a3a3a3;
    background: #efefef;
}

.xml svg {
    width: 14px;
    height: 18px;
    vertical-align: middle;
}

.recipient .obs-title {
    padding-left: 0;
    margin-top: 3px;
}

.obs-line {
    display: flex;
    align-items: center;
    gap: 8px;
    height: 27px;
    padding-left: 2px;
}

.obs-line .mini {
    width: 22px;
    height: 22px;
}

.obs-text {
    width: 100%;
    height: 62px;
    font: 14px/16px var(--sans);
    border-bottom: 0;
    white-space: pre;
    overflow: hidden;
    padding-top: 2px;
}

/* Totals column */
.totals {
    width: 303px;
}

.totals .tabs {
    padding-left: 70px;
    height: 31px;
}

.totals-grid {
    display: grid;
    grid-template-columns: 124px 127px;
    column-gap: 9px;
    align-content: start;
    height: 644px;
    margin: 2px 2px 0 0;
    border-top: 2px solid #8b8b8b;
    border-right: 1px solid #ddd;
    border-bottom: 1px solid #ddd;
}

.total {
    height: 58px;
}

.total.end {
    height: 61px;
}

.total label {
    display: block;
    height: 23px;
    white-space: nowrap;
    overflow: hidden;
    padding-left: 81px;
    margin-right: -4px;
}

.total:nth-child(even) label {
    padding-left: 0;
    margin: 0 -6px 0 -2px;
}

.total input, .total select {
    display: block;
    width: 100%;
    text-align: right;
    text-align-last: right;
}

.total select {
    height: 27px;
    margin-top: -2px;
    padding-right: 23px;
}

.total .gray {
    background-color: #bdbdbd;
    border-color: #bdbdbd;
    font-weight: 700;
    color: #000;
}

.total .green {
    color: var(--green);
    font-weight: 700;
}

.total.bag {
    padding-top: 23px;
}

/* Bars at the bottom of the window */
.keep-bar {
    flex: none;
    height: 27px;
    display: flex;
    align-items: center;
    gap: 14px;
    padding-left: 14px;
    background: #f0f0f0;
    border-top: 1px solid #fff;
    border-bottom: 1px solid #9c9c9c;
    font: 13px var(--sans);
}

.keep-bar label, .auto {
    display: flex;
    align-items: center;
    gap: 5px;
}

.bottom-bar {
    flex: none;
    height: 30px;
    display: flex;
    align-items: center;
    gap: 3px;
    padding-top: 3px;
    background: #f0f0f0;
}

.key {
    width: 36px;
    height: 27px;
    border-right: 1px solid #999;
    border-bottom: 1px solid #999;
}

.key span {
    display: block;
    width: 21px;
    height: 10px;
    margin: auto;
    border: 2px solid #aaa;
    border-bottom-color: #6d6d6d;
    background: #858585;
}

.mode, .auto {
    height: 27px;
    line-height: 26px;
    border-left: 2px solid #a0a0a0;
    border-top: 1px solid #a0a0a0;
}

.mode {
    width: 102px;
    text-align: center;
    font-weight: 700;
    color: #8b8b8b;
}

.auto {
    flex: 1;
    padding-left: 7px;
    font-weight: 700;
    font-family: var(--sans);
    color: #000;
}

.last {
    margin-right: 89px;
    line-height: 0;
}

.grip {
    width: 14px;
    height: 14px;
    align-self: flex-end;
}

/* Status bar */
.statusbar {
    flex: none;
    height: 29px;
    display: flex;
    align-items: center;
    background: #f0f0f0;
    border-bottom: 2px solid #b8b8b8;
    color: #555;
    white-space: nowrap;
}

.statusbar > * {
    height: 27px;
    line-height: 26px;
    border-right: 1px solid #8e8e8e;
}

.statusbar .date {
    width: 162px;
    padding-left: 5px;
    font-size: 15px;
}

.statusbar .social {
    display: flex;
    align-items: center;
    gap: 9px;
    padding: 2px 2px 0 5px;
    border: 0;
}

.social a {
    display: flex;
    color: #222;
    text-decoration: none;
}

.social svg {
    width: 22px;
    height: 22px;
    fill: #000;
}

.social .at {
    width: 22px;
    font-size: 21px;
}

.social .cap svg {
    width: 28px;
    height: 22px;
}

.statusbar .site {
    color: #000;
    padding: 0 4px 0 2px;
}

.statusbar .version-info {
    padding: 0 9px 0 3px;
}

.company {
    flex: 1;
    text-align: center;
}

.statusbar .reg {
    width: 297px;
    padding-left: 4px;
    border: 0;
}

/* Dialog, floats over the main window */
.dialog {
    position: absolute;
    top: 153px;
    right: 238px;
    bottom: 30px;
    left: 246px;
    display: flex;
    flex-direction: column;
    overflow: hidden;
    border: 1px solid #a9a9a9;
    border-radius: 9px;
    background: #f0f0f0;
    box-shadow: 0 14px 48px rgba(0, 0, 0, .5);
    color: #000;
    font-family: var(--sans);
    z-index: 2;
}

#dialog-title {
    flex: none;
    height: 32px;
    padding-left: 3px;
    background: #f3f3f3;
    font: 400 14px/32px var(--ui);
}

.dialog .toolbar {
    font-family: var(--ui);
}

.dialog .mini {
    width: 24px;
    height: 24px;
}

.dialog input, .dialog select {
    height: 24px;
}

.dialog select {
    background-position: right 6px center, right 1px center;
    background-size: 10px 6px, 21px 100%;
}

/* Summary row */
.summary {
    flex: none;
    display: flex;
    gap: 3px;
    height: 54px;
    padding: 3px 0 1px 3px;
    border-bottom: 1px solid #9f9f9f;
}

.summary .group {
    flex: none;
    height: 50px;
}

.summary .s-type {
    width: 169px;
}

.s-type b {
    display: block;
    padding-left: 5px;
    font-size: 18px;
    line-height: 26px;
    white-space: nowrap;
    color: var(--green);
}

.summary .s-doc {
    width: 127px;
}

.dialog .s-doc input {
    display: block;
    width: 114px;
    height: 29px;
    margin: 0 auto;
    padding: 0 2px;
    border: 2px solid #0a6ae0;
    color: #fff;
    font-size: 18px;
    font-weight: 700;
    background: linear-gradient(#0078d7, #0078d7) 2px center / 101px 20px no-repeat #fff;
}

.s-count {
    width: 91px;
}

.s-count b {
    display: block;
    padding-right: 5px;
    text-align: center;
    font-size: 15px;
    line-height: 32px;
    color: #00f;
}

.s-state {
    width: 95px;
}

.s-state b, .s-rate b {
    padding-left: 3px;
    font-size: 15px;
    line-height: 34px;
}

.s-date {
    width: 124px;
}

.s-date select {
    width: 110px;
    margin: 4px 0 0 8px;
}

.summary .s-mov {
    width: 133px;
    margin-left: 2px;
}

.s-rate {
    width: 105px;
}

.s-rate b {
    padding-left: 9px;
}

.s-total {
    width: 172px;
    margin-left: auto;
}

.dialog .s-total select {
    display: block;
    width: 140px;
    height: 27px;
    margin-left: 6px;
    padding-right: 24px;
    font-weight: 700;
    font-size: 16px;
    text-align-last: right;
}

.s-balance {
    width: 183px;
    border-right: 0;
    display: flex;
    gap: 10px;
    padding: 3px 0 0 6px;
}

.s-balance input {
    width: 138px;
    text-align: right;
    font-weight: 700;
    font-size: 16px;
    color: var(--green);
}

/* Document area */
.document {
    flex: none;
    display: grid;
    grid-template-columns: minmax(0, 897fr) minmax(0, 534fr);
    gap: 1px;
    padding-right: 2px;
    height: 203px;
    border-top: 1px solid #fff;
    font-size: 13px;
}

.doc-info {
    display: flex;
    flex-direction: column;
}

.doc-tab {
    align-self: flex-start;
    height: 25px;
    margin-left: 3px;
    padding: 0 7px;
    border-left: 1px solid #fff;
    border-right: 2px solid #777;
}

.doc-panel {
    flex: 1;
    margin-left: 1px;
    padding: 2px 1px 0 4px;
    border-top: 2px solid #fff;
    border-right: 4px solid #9e9e9e;
    border-bottom: 4px solid #9e9e9e;
    border-left: 1px solid #fff;
}

.doc-row {
    display: grid;
    grid-template-columns: minmax(0, 474fr) minmax(0, 409fr);
    gap: 3px;
    height: 52px;
    padding-bottom: 1px;
    border-bottom: 1px solid #a6a6a6;
}

.doc-row.last-row {
    height: 57px;
}

.party {
    display: grid;
    grid-template-columns: 65px 27px 1fr;
    align-items: start;
    padding: 4px 4px 0 4px;
}

.party input {
    font-size: 14px;
}

.party .w-full {
    width: 63px;
}

.party .w-short {
    width: 38px;
}

.party .w-mid {
    width: 49px;
}

.effective {
    margin-top: 8px;
    display: flex;
    align-items: flex-start;
    padding: 5px 29px 0 5px;
}

.effective b {
    flex: 1;
    font-size: 18px;
    line-height: 36px;
    color: var(--green);
}

.effective .list-btn {
    width: 111px;
}

.lot-row {
    display: grid;
    grid-template-columns: 153px 1fr;
    gap: 3px;
}

.lot-row .group {
    padding: 5px;
}

.lot input {
    width: 139px;
}

.kind b {
    font-size: 15px;
    line-height: 20px;
}

.lot-row .kind {
    padding-top: 4px;
}

.cost {
    display: flex;
    padding: 4px 22px 0 4px;
    gap: 6px;
}

.cost input {
    width: 86px;
    white-space: pre;
}

.cost select {
    flex: 1;
}

.notes {
    margin-bottom: 3px;
    padding: 7px 1px 2px;
}

.notes textarea {
    width: 100%;
    height: 100%;
}

/* Installments */
.installments {
    flex: 1;
    min-height: 0;
    display: flex;
    border-bottom: 3px solid #a0a0a0;
}

.side {
    flex: none;
    width: 33px;
    display: flex;
    flex-direction: column;
    align-items: center;
    gap: 8px;
    padding-top: 8px;
    background: linear-gradient(#c6f4ff, #9ad0ea 30%, #4a8dcb 70%, #2b65b2);
}

.side button {
    height: 19px;
}

.side svg {
    width: 20px;
    height: 19px;
    display: block;
    color: #a0a0a0;
}

.side button:disabled svg {
    filter: drop-shadow(1px 1px 0 #fff);
}

.list-off {
    --dot: #a0a0a0;
    --dot3: #a0a0a0;
    --bar: #a0a0a0;
}

.grid-area {
    flex: 1;
    min-width: 0;
    display: flex;
    flex-direction: column;
    background: #f0f0f0;
}

.grid-area .tabs {
    height: 28px;
    padding-left: 5px;
}

.grid-area .tab {
    padding: 0 6px;
}

.grid-scroll {
    flex: 1;
    min-height: 0;
    margin-top: 3px;
    overflow: hidden;
    border-top: 2px solid #1a1a1a;
    background: #a4c3eb;
}

table {
    width: 1460px;
    height: 100%;
    table-layout: fixed;
    border-collapse: separate;
    border-spacing: 0;
    line-height: 20px;
}

.c-mark { width: 15px; }
.c-parc { width: 67px; }
.c-sub { width: 65px; }
.c-date { width: 115px; }
.c-value { width: 125px; }
.c-status { width: 91px; }
.c-reneg { width: 161px; }
.c-paid { width: 143px; }
.c-pre { width: 198px; }

th, td {
    padding: 0 3px;
    text-align: left;
    white-space: nowrap;
    overflow: hidden;
}

th {
    height: 24px;
    background: #316ac5;
    color: #fff;
    border-right: 1px solid #14284c;
    border-bottom: 1px solid #14284c;
}

.row td {
    height: 22px;
    background: #d9eaf7;
    border-right: 1px solid #a9a9a9;
    border-bottom: 1px solid #a9a9a9;
}

.row .num, th.num {
    text-align: right;
    padding-right: 1px;
}

.row .state {
    padding-left: 10px;
}

th.pre {
    padding-left: 26px;
}

.mark, .row .mark {
    padding: 0 2px;
}

.row .mark {
    background: #a4c3eb;
    border: 1px solid #111;
}

.mark svg {
    display: block;
    width: 9px;
    height: 12px;
    --dot: #fff;
    --dot3: #fff;
    --bar: #fff;
}

tfoot td {
    height: 29px;
    padding: 0 2px;
    background: #ffffe1;
    border-top: 1px solid #a9a9a9;
}

tfoot .mark {
    background: #a4c3eb;
}

tfoot span {
    display: block;
    height: 24px;
    padding-right: 3px;
    border: 1px solid #aaa;
    text-align: right;
    line-height: 22px;
    font-weight: 700;
    font-size: 15px;
    color: var(--navy);
}

tfoot .cut {
    padding-left: 122px;
    text-align: left;
}

.dialog-foot {
    flex: none;
    height: 37px;
    border-top: 1px solid #fff;
}
```
